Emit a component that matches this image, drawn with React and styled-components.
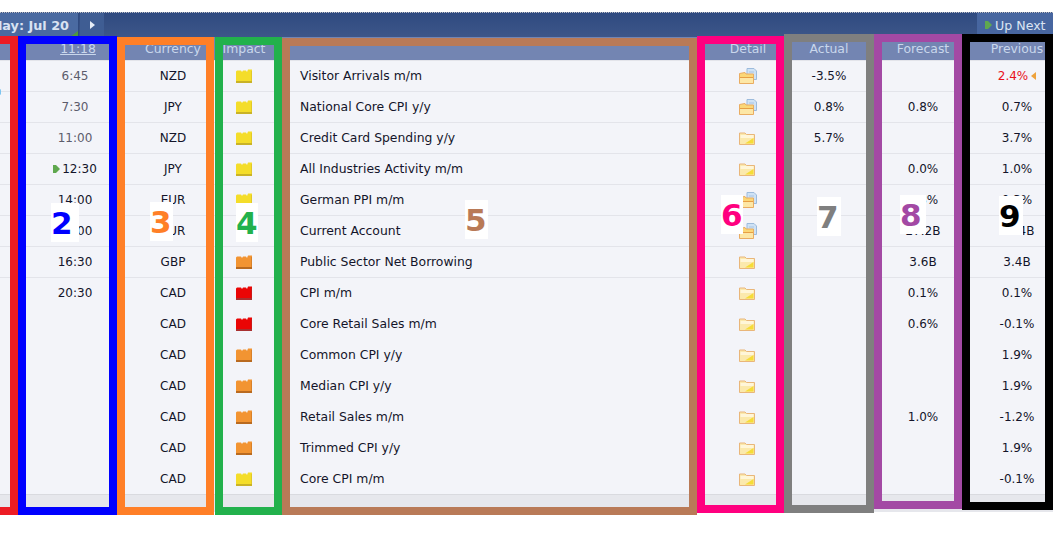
import React from "react";
import styled, { createGlobalStyle, css } from "styled-components";

const Global = createGlobalStyle`
  html, body { margin: 0; padding: 0; background: #fff; overflow: hidden; }
  body { font-family: "DejaVu Sans", Verdana, sans-serif; font-size: 12px; color: #14142a; }
`;

const columns = css`
  display: grid;
  grid-template-columns: 26px 98px 98px 44px 437px 90px 72px 116px 72px;
`;

const Page = styled.div`
  position: relative;
  width: 1053px;
  height: 553px;
  overflow: hidden;
  padding-top: 12px;
  box-sizing: border-box;
`;
const Bar = styled.div`
  display: flex;
  height: 24px;
  border-top: 1px dotted #b9bcc4;
  background: linear-gradient(#2f4a80, #3d5689);
`;
const DateTab = styled.div`
  position: relative;
  width: 79px;
  display: flex;
  justify-content: flex-end;
  align-items: center;
  overflow: hidden;
  white-space: nowrap;
  padding-right: 9px;
  box-sizing: border-box;
  flex: none;
  font-weight: 700;
  font-size: 12.8px;
  color: #d9e3f2;
  background: #4a6aa1;
  border-right: 1px solid #2f4a80;
`;
const Corner = styled.span`
  position: absolute;
  right: 0;
  bottom: 0;
  width: 0;
  height: 0;
  border-left: 8px solid transparent;
  border-bottom: 6px solid #4f9a3c;
`;
const NextDay = styled.div`
  width: 24px;
  margin-left: 1px;
  display: flex;
  align-items: center;
  justify-content: center;
  background: #3f5d93;
`;
const Arrow = styled.span`
  width: 0;
  height: 0;
  border-top: 4px solid transparent;
  border-bottom: 4px solid transparent;
  border-left: 5px solid #e6edf7;
`;
const UpNext = styled.div`
  margin-left: auto;
  width: 76px;
  display: flex;
  align-items: center;
  gap: 3px;
  padding-left: 8px;
  box-sizing: border-box;
  font-size: 12.6px;
  white-space: nowrap;
  color: #dbe5f3;
  background: #4766a0;
`;
const HeaderRow = styled.div`
  ${columns}
  height: 23px;
  align-items: center;
  font-size: 12.4px;
  background: #7385b2;
  color: #c9d7ec;
  border-bottom: 1px solid #e3e4ea;
`;
const HeadCell = styled.div`
  text-align: center;
  text-decoration: ${(p) => (p.$under ? "underline" : "none")};
  padding-left: ${(p) => (p.$under ? "6px" : "0")};
`;
const Row = styled.div`
  ${columns}
  height: 31px;
  box-sizing: border-box;
  align-items: center;
  background: #f3f4f9;
  border-bottom: 1px solid ${(p) => p.$line || "transparent"};
`;
const Lead = styled.div`
  position: relative;
  height: 100%;
`;
const Dot = styled.span`
  position: absolute;
  left: -2px;
  bottom: -4px;
  width: 3px;
  height: 6px;
  border-radius: 2px;
  background: #7cc4f0;
`;
const Cell = styled.div`
  display: flex;
  align-items: center;
  justify-content: center;
  gap: 2px;
  white-space: nowrap;
  color: ${(p) => p.$color || "#14142a"};
`;
const EventName = styled.div`
  padding: 0 0 2px 34px;
  font-size: 12.4px;
  white-space: nowrap;
`;
const Footer = styled.div`
  height: 17px;
  background: #e6e7ec;
`;
const Frame = styled.div`
  position: absolute;
  box-sizing: border-box;
  left: ${(p) => p.$x}px;
  top: ${(p) => p.$y}px;
  width: ${(p) => p.$w}px;
  height: ${(p) => p.$h}px;
  border: 8px solid ${(p) => p.$c};
`;
const Tag = styled.div`
  position: absolute;
  left: ${(p) => p.$x}px;
  top: ${(p) => p.$y}px;
  width: ${(p) => p.$w}px;
  height: 39px;
  display: flex;
  align-items: center;
  justify-content: flex-start;
  overflow: hidden;
  background: #fff;
  color: ${(p) => p.$c};
  font: 700 31px "DejaVu Sans", sans-serif;
`;
const RevisedMark = styled.span`
  width: 0;
  height: 0;
  margin-left: 1px;
  border-top: 4px solid transparent;
  border-bottom: 4px solid transparent;
  border-right: 5px solid #eea23c;
`;

const IMPACT = {
  y: ["#f4dd2a", "#c9b227"],
  o: ["#f29432", "#b96a20"],
  r: ["#ea0505", "#a83030"],
};

const Impact = ({ level }) => {
  const [fill, low] = IMPACT[level];
  return (
    <svg width="16" height="14" viewBox="0 0 16 14">
      <path d="M0 2.5 L1 1.5 H5 L6 3 L7 1.5 H10 L11 3 L12 .5 H16 V14 H0 Z" fill={fill} />
      <rect x="0" y="12" width="16" height="2" fill={low} />
      <rect x="15" y="2" width="1" height="12" fill={low} opacity=".45" />
    </svg>
  );
};

const Pointer = () => (
  <svg width="7" height="8" viewBox="0 0 7 8">
    <path d="M0 0 H3 L7 4 L3 8 H0 Z" fill="#5fa84f" />
  </svg>
);

const DocFolder = () => (
  <svg width="19" height="16" viewBox="0 0 19 16">
    <path d="M8 .5 H15 L17.5 3 V11.5 H8 Z" fill="#cfe2f5" stroke="#9dbbdc" />
    <path d="M10 4 H15 M10 6.5 H15" stroke="#a8c4e2" />
    <path d="M.5 5.5 L6 4.5 L7 6 H14.5 V15.5 H.5 Z" fill="#fbd777" stroke="#e9ac62" />
    <path d="M1 9.5 H14" stroke="#e79f45" />
    <rect x="1" y="10" width="13" height="5" fill="#fde7a6" />
  </svg>
);

const PlainFolder = () => (
  <svg width="19" height="13" viewBox="0 0 19 13">
    <path d="M.5 1 H6 L7.5 2.5 H15.5 V12.5 H.5 Z" fill="#fbe9ac" stroke="#e9b67a" />
    <rect x="1.5" y="3" width="13" height="3" fill="#fff6d8" />
    <path d="M6 11.5 L14.5 6 V11.5 Z" fill="#f6dc37" />
  </svg>
);

const rows = [
  { t: "6:45", tc: "#5c5c6c", cur: "NZD", imp: "y", ev: "Visitor Arrivals m/m", doc: true, a: "-3.5%", p: "2.4%", rev: true, line: 1 },
  { t: "7:30", tc: "#5c5c6c", cur: "JPY", imp: "y", ev: "National Core CPI y/y", doc: true, a: "0.8%", f: "0.8%", p: "0.7%", line: 1 },
  { t: "11:00", tc: "#5c5c6c", cur: "NZD", imp: "y", ev: "Credit Card Spending y/y", a: "5.7%", p: "3.7%", line: 1 },
  { t: "12:30", now: true, cur: "JPY", imp: "y", ev: "All Industries Activity m/m", f: "0.0%", p: "1.0%", line: 1 },
  { t: "14:00", cur: "EUR", imp: "y", ev: "German PPI m/m", doc: true, f: "0.3%", p: "0.3%", line: 1 },
  { t: "14:00", cur: "EUR", imp: "y", ev: "Current Account", doc: true, f: "27.2B", p: "29.4B", line: 1 },
  { t: "16:30", cur: "GBP", imp: "o", ev: "Public Sector Net Borrowing", f: "3.6B", p: "3.4B", line: 1 },
  { t: "20:30", cur: "CAD", imp: "r", ev: "CPI m/m", f: "0.1%", p: "0.1%" },
  { cur: "CAD", imp: "r", ev: "Core Retail Sales m/m", f: "0.6%", p: "-0.1%" },
  { cur: "CAD", imp: "o", ev: "Common CPI y/y", p: "1.9%" },
  { cur: "CAD", imp: "o", ev: "Median CPI y/y", p: "1.9%" },
  { cur: "CAD", imp: "o", ev: "Retail Sales m/m", f: "1.0%", p: "-1.2%" },
  { cur: "CAD", imp: "o", ev: "Trimmed CPI y/y", p: "1.9%" },
  { cur: "CAD", imp: "y", ev: "Core CPI m/m", p: "-0.1%", end: 1 },
];

const frames = [
  [-8, 36, 26, 479, "#ed1c24"],
  [18, 36, 99, 479, "#0000ff"],
  [117, 37, 97, 478, "#ff7f27"],
  [215, 37, 67, 478, "#22b14c"],
  [282, 38, 415, 477, "#b97a57"],
  [697, 36, 87, 477, "#ff007f"],
  [784, 34, 90, 479, "#7f7f7f"],
  [874, 34, 88, 475, "#a349a4"],
  [962, 34, 91, 476, "#000000"],
];

const tags = [
  ["2", 51, 203, 28, "#0000ff"],
  ["3", 150, 202, 23, "#ff7f27"],
  ["4", 236, 203, 22, "#22b14c"],
  ["5", 465, 200, 23, "#b97a57"],
  ["6", 721, 195, 22, "#ff007f"],
  ["7", 817, 197, 24, "#7f7f7f"],
  ["8", 900, 195, 26, "#a349a4"],
  ["9", 999, 196, 24, "#000000"],
];

export default function App() {
  return (
    <Page>
      <Global />
      <Bar>
        <DateTab>
          Friday: Jul 20
          <Corner />
        </DateTab>
        <NextDay>
          <Arrow />
        </NextDay>
        <UpNext>
          <Pointer />
          Up Next
        </UpNext>
      </Bar>
      <HeaderRow>
        <div />
        <HeadCell $under>11:18</HeadCell>
        <HeadCell>Currency</HeadCell>
        <HeadCell>Impact</HeadCell>
        <div />
        <HeadCell>Detail</HeadCell>
        <HeadCell>Actual</HeadCell>
        <HeadCell>Forecast</HeadCell>
        <HeadCell>Previous</HeadCell>
      </HeaderRow>
      {rows.map((r, i) => (
        <Row key={i} $line={r.end ? "#d9dadf" : r.line ? "#e3e4ea" : undefined}>
          <Lead>{i === 0 && <Dot />}</Lead>
          <Cell $color={r.tc}>
            {r.now && <Pointer />}
            {r.t}
          </Cell>
          <Cell>{r.cur}</Cell>
          <Cell>
            <Impact level={r.imp} />
          </Cell>
          <EventName>{r.ev}</EventName>
          <Cell>{r.doc ? <DocFolder /> : <PlainFolder />}</Cell>
          <Cell>{r.a}</Cell>
          <Cell>{r.f}</Cell>
          <Cell $color={r.rev ? "#e8101a" : undefined}>
            {r.p}
            {r.rev && <RevisedMark />}
          </Cell>
        </Row>
      ))}
      <Footer />
      {frames.map(([x, y, w, h, c]) => (
        <Frame key={c} $x={x} $y={y} $w={w} $h={h} $c={c} />
      ))}
      {tags.map(([n, x, y, w, c]) => (
        <Tag key={n} $x={x} $y={y} $w={w} $c={c}>
          {n}
        </Tag>
      ))}
    </Page>
  );
}
